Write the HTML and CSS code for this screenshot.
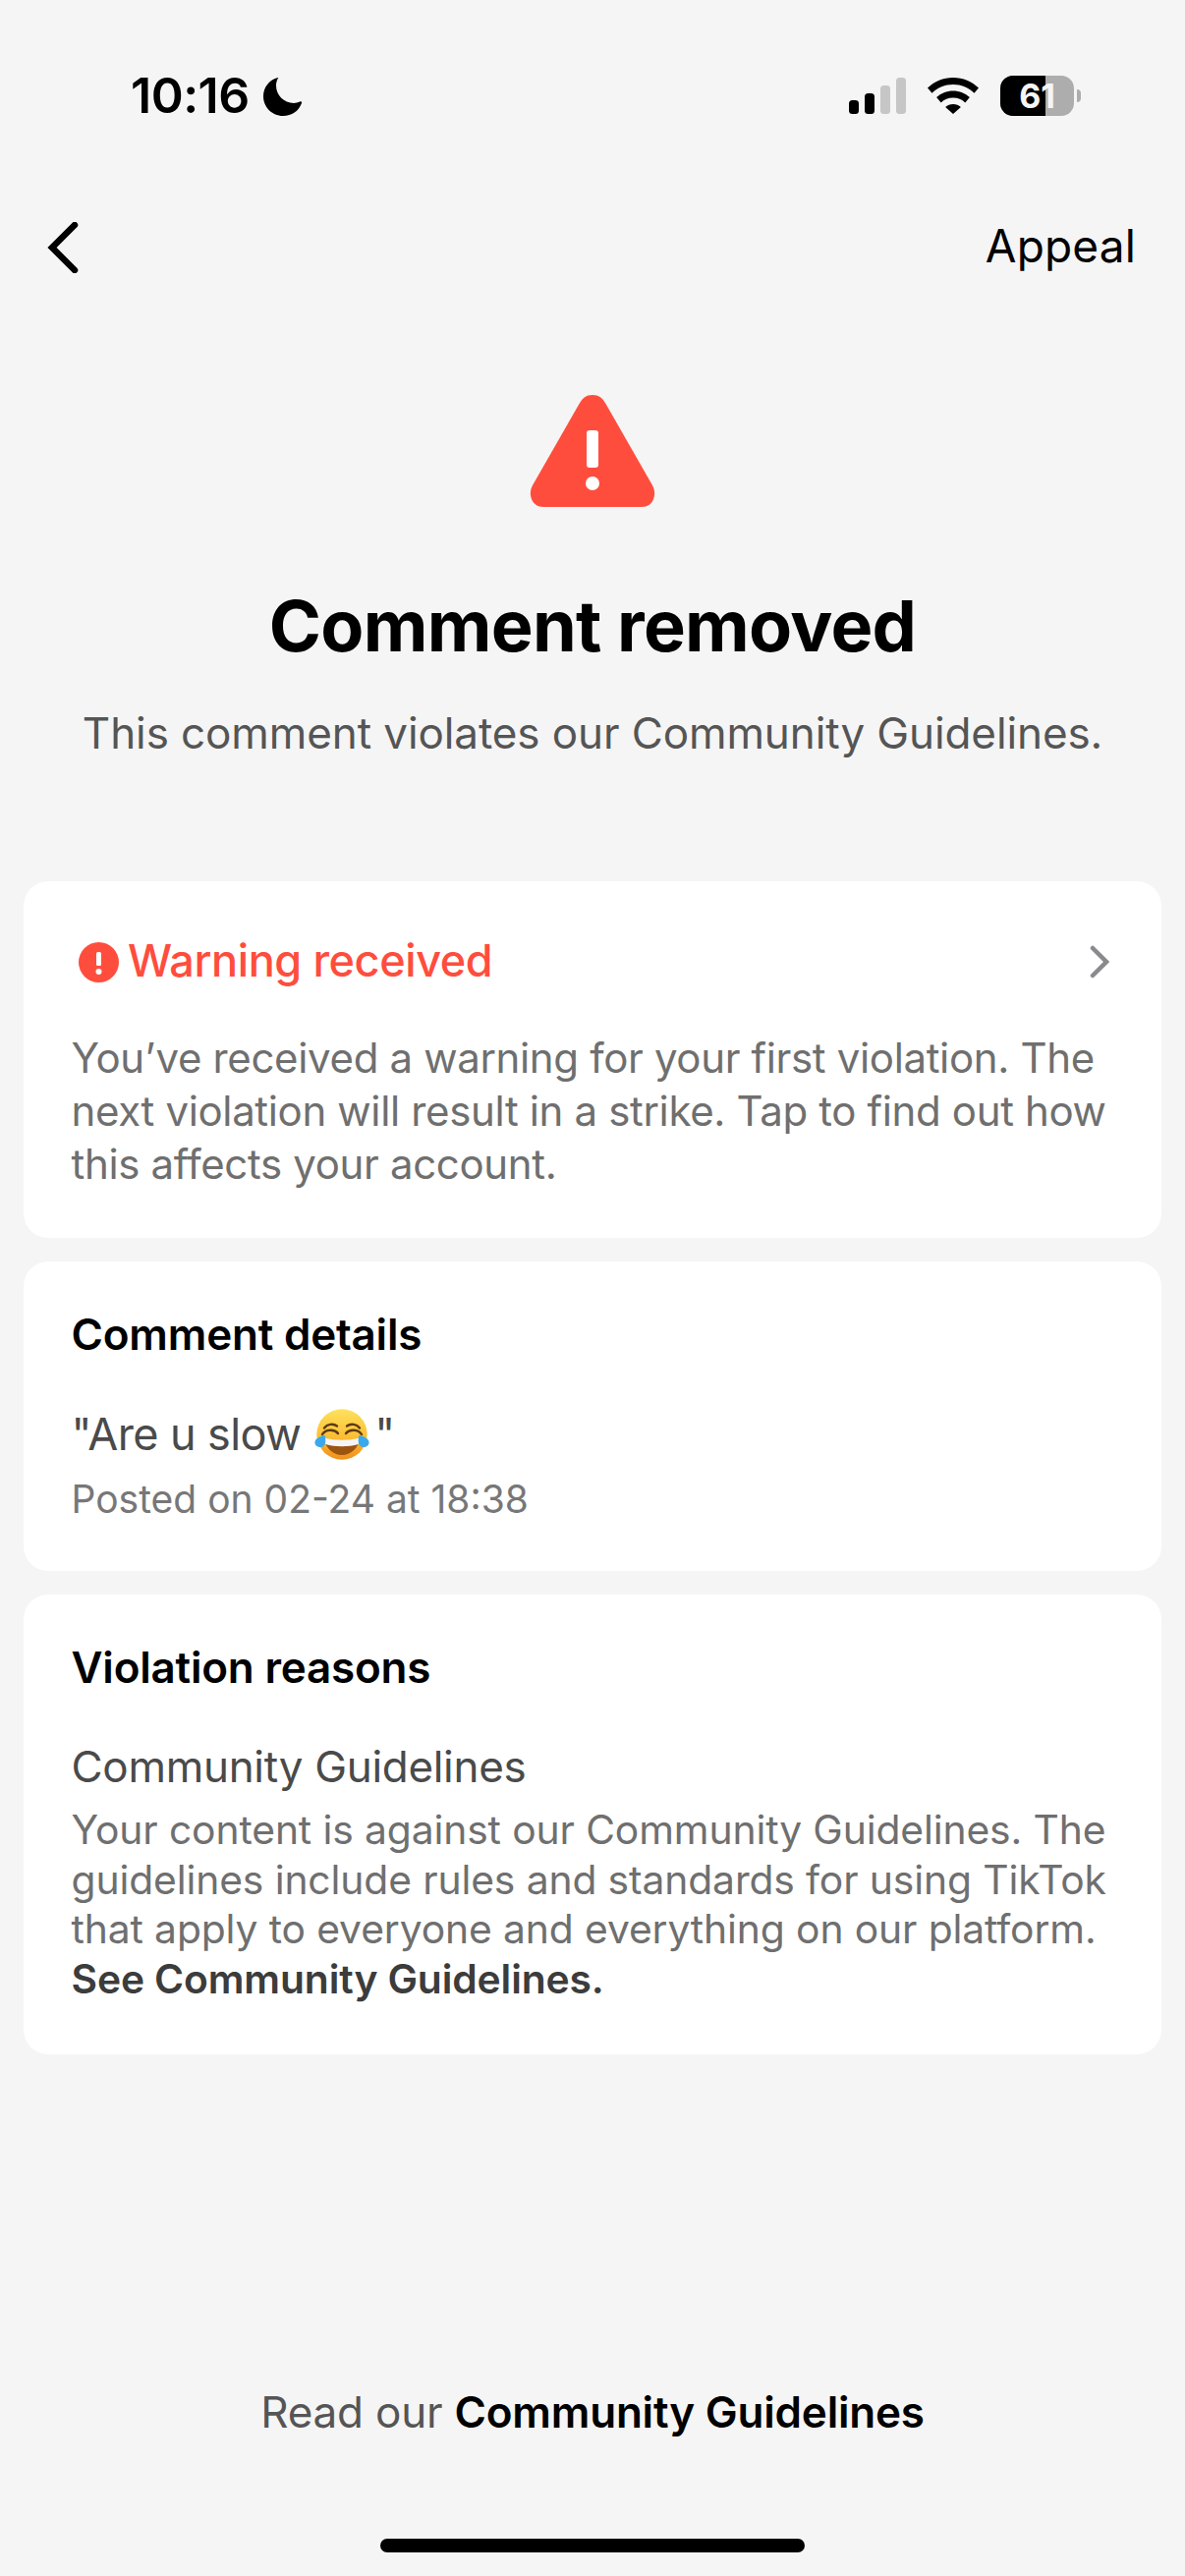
FILE: index.html
```html
<!DOCTYPE html>
<html lang="en">
<head>
<meta charset="utf-8">
<title>Comment removed</title>
<link rel="stylesheet" href="styles.css">
</head>
<body>
<div class="page">
  <header class="status">
    <div class="status-left">
      <span class="time">10:16</span>
      <svg class="moon" viewBox="0 0 40 40"><path d="M15 1C6 3 0 11 0 20c0 11 9 20 20 20 9 0 16-5 19-13 .4-1.400-.8-2-1.800-1.500-2 .9-4 1.400-6.200 1.400C21 26.900 13 19 13 9c0-2.400.5-4.600 1.500-6.600C15.200 1.300 15.800.8 15 1z"/></svg>
    </div>
    <div class="status-right">
      <svg class="signal" viewBox="0 0 58 37"><rect x="0" y="23" width="10" height="14" rx="3.500"/><rect x="16" y="16" width="10" height="21" rx="3.500"/><rect class="off" x="32" y="8" width="10" height="29" rx="3.500"/><rect class="off" x="48" y="0" width="10" height="37" rx="3.500"/></svg>
      <svg class="wifi" viewBox="0 0 52 37"><path d="M26 0c10 0 19 4 26 10.500l-4.500 5.200C41.800 10.300 34.200 7 26 7S10.200 10.300 4.500 15.700L0 10.500C7 4 16 0 26 0z"/><path d="M26 13.500c6.500 0 12.400 2.500 16.900 6.600l-4.600 5.300c-3.200-3-7.500-4.900-12.300-4.900s-9.100 1.900-12.300 4.900l-4.600-5.300C13.600 16 19.500 13.500 26 13.500z"/><path d="M26 27c3 0 5.800 1.100 7.900 3L26 37l-7.900-7c2.100-1.900 4.900-3 7.900-3z"/></svg>
      <div class="battery">
        <span class="battery-fill"></span>
        <span class="battery-num">61</span>
      </div>
      <span class="battery-tip"></span>
    </div>
  </header>

  <nav class="nav">
    <svg class="back" viewBox="0 0 32 52"><path d="M28 3 5 26l23 23"/></svg>
    <span class="appeal">Appeal</span>
  </nav>

  <section class="hero">
    <svg class="hero-icon" viewBox="0 0 128 114"><path class="red" d="M64 0c6.500 0 10 3 13.500 9l47.500 83c5 9 1 22-11 22H14C2 114-2 101 3 92L50.500 9C54 3 57.500 0 64 0z"/><rect class="white" x="58" y="36" width="12" height="38" rx="3"/><circle class="white" cx="64" cy="90" r="7"/></svg>
    <h1 class="title">Comment removed</h1>
    <p class="subtitle">This comment violates our Community Guidelines.</p>
  </section>

  <main class="cards">
    <article class="card card-warning">
      <div class="warning-head">
        <div class="warning-label">
          <svg class="warn-icon" viewBox="0 0 41 41"><circle class="red" cx="20.500" cy="20.500" r="20.500"/><rect class="white" x="18" y="10" width="5" height="14" rx="1.500"/><circle class="white" cx="20.500" cy="30" r="3"/></svg>
          <span class="warning-text">Warning received</span>
        </div>
        <svg class="chev" viewBox="0 0 20 34"><path d="M3 3l14 14L3 31"/></svg>
      </div>
      <p class="warning-body">You’ve received a warning for your first violation. The next violation will result in a strike. Tap to find out how this affects your account.</p>
    </article>

    <article class="card card-details">
      <h2 class="card-title">Comment details</h2>
      <p class="quote"><span>"Are u slow</span><svg class="emoji" viewBox="0 0 56 52"><defs><linearGradient id="face" x1="0" y1="0" x2="0" y2="1"><stop offset="0" stop-color="#fde25e"/><stop offset="0.55" stop-color="#fbbe35"/><stop offset="1" stop-color="#f0901c"/></linearGradient></defs><circle cx="28" cy="26" r="25.700" fill="url(#face)"/><path d="M10 30c11 3 25 3 36 0-1 10-9 17-18 17S11 40 10 30z" fill="#9c5510"/><path d="M10 29.500c11 3 25 3 36 0l-1.200 6.500c-10 3-23.600 3-33.600 0z" fill="#f6f6f6"/><path d="M8 26c3-5 12-6 16-1M48 26c-3-5-12-6-16-1M10 19.500c3-4 9-5 13-2M46 19.500c-3-4-9-5-13-2" fill="none" stroke="#5d3a12" stroke-width="2.400" stroke-linecap="round"/><path d="M10.500 27c.8 2 1 5 .6 7.500-.5 3-2.600 4.500-5.100 4.500C2.500 39 0 36.500.5 33.500 1 30 7 27.500 10.500 27zM45.500 27c-.8 2-1 5-.6 7.500.5 3 2.600 4.500 5.100 4.500 3.500 0 6-2.500 5.500-5.500C55 30 49 27.500 45.500 27z" fill="#38a9ee"/></svg><span>"</span></p>
      <p class="posted">Posted on 02-24 at 18:38</p>
    </article>

    <article class="card card-reasons">
      <h2 class="card-title">Violation reasons</h2>
      <p class="reason-name">Community Guidelines</p>
      <p class="reason-body">Your content is against our Community Guidelines. The guidelines include rules and standards for using TikTok that apply to everyone and everything on our platform. <strong class="reason-link">See Community Guidelines.</strong></p>
    </article>
  </main>

  <footer class="footer">
    <p class="read">Read our <strong class="read-link">Community Guidelines</strong></p>
    <div class="home"></div>
  </footer>
</div>
</body>
</html>
```

FILE: styles.css
```css
* { box-sizing: border-box; margin: 0; padding: 0; }
html, body { background: #f5f5f5; }
body { font-family: "Inter", "Liberation Sans", sans-serif; color: #000; }
.page { width: 1206px; height: 2622px; display: flex; flex-direction: column; overflow: hidden; }

.status { height: 200px; padding: 77px 106px 0 133px; display: flex; justify-content: space-between; align-items: flex-start; }
.status-left { display: flex; align-items: center; gap: 14px; height: 41px; }
.time { font-size: 50px; font-weight: 600; line-height: 41px; letter-spacing: -0.5px; }
.moon { width: 40px; height: 40px; fill: #000; }
.status-right { display: flex; align-items: center; height: 41px; }
.signal { width: 58px; height: 37px; fill: #000; margin-right: 22px; }
.signal .off { fill: #c6c6c6; }
.wifi { width: 52px; height: 37px; fill: #000; margin-right: 22px; }
.battery { position: relative; width: 75px; height: 41px; border-radius: 13px; background: #adadad; overflow: hidden; display: flex; align-items: center; justify-content: center; }
.battery-fill { position: absolute; left: 0; top: 0; bottom: 0; width: 46px; background: #000; }
.battery-num { position: relative; color: #f5f5f5; font-size: 34px; font-weight: 700; line-height: 41px; }
.battery-tip { width: 4px; height: 13px; margin-left: 3px; background: #adadad; border-radius: 0 6px 6px 0; }

.nav { height: 104px; padding: 0 50px 0 48px; display: flex; justify-content: space-between; align-items: center; }
.back { width: 32px; height: 52px; fill: none; stroke: #000; stroke-width: 6.500; stroke-linecap: round; stroke-linejoin: miter; }
.appeal { font-size: 46px; font-weight: 400; letter-spacing: 0.15px; padding-bottom: 4px; }

.hero { display: flex; flex-direction: column; align-items: center; padding-top: 98px; }
.hero-icon { width: 128px; height: 114px; }
.red { fill: #ff4d3d; }
.white { fill: #fff; }
.title { font-size: 72px; font-weight: 700; line-height: 86px; margin-top: 78px; letter-spacing: -0.7px; }
.subtitle { font-size: 44px; font-weight: 400; line-height: 54px; margin-top: 39px; color: #555; letter-spacing: -0.1px; }

.cards { display: flex; flex-direction: column; gap: 24px; padding: 0 24px; margin-top: 124px; }
.card { background: #fff; border-radius: 25px; padding: 0 50px 0 48.500px; }
.card-warning { height: 363px; padding-top: 52px; }
.warning-head { display: flex; justify-content: space-between; align-items: center; height: 60px; padding-right: 3px; }
.warning-label { display: flex; align-items: center; gap: 9px; margin-left: 7.500px; }
.warn-icon { width: 41px; height: 41px; }
.warning-text { font-size: 45px; font-weight: 500; color: #ff4d3d; letter-spacing: -0.4px; padding-bottom: 3px; }
.chev { width: 20px; height: 34px; fill: none; stroke: #8a8a8e; stroke-width: 4.500; stroke-linecap: round; }
.warning-body { margin-top: 41px; font-size: 42px; line-height: 54px; color: #6f6f6f; letter-spacing: -0.35px; }

.card-details { height: 315px; padding-top: 44px; }
.card-title { font-size: 44px; font-weight: 600; line-height: 60px; letter-spacing: -0.2px; }
.quote { margin-top: 42px; font-size: 45px; line-height: 60px; color: #4a4a4a; letter-spacing: -0.6px; display: flex; align-items: center; white-space: pre; }
.emoji { width: 56px; height: 52px; margin: 0 5px 0 14px; }
.posted { margin-top: 9px; font-size: 39px; line-height: 54px; color: #777; }

.card-reasons { height: 468px; padding-top: 44px; }
.reason-name { margin-top: 42px; font-size: 44px; line-height: 58px; color: #4a4a4a; letter-spacing: -0.3px; }
.reason-body { margin-top: 10px; font-size: 40.800px; line-height: 50.700px; color: #6f6f6f; letter-spacing: -0.12px; }
.reason-link { font-weight: 600; color: #3c3c3c; }

.footer { margin-top: auto; display: flex; flex-direction: column; align-items: center; padding-bottom: 24px; }
.read { font-size: 44px; line-height: 60px; color: #555; letter-spacing: -0.2px; }
.read-link { font-weight: 600; color: #000; }
.home { width: 432px; height: 14px; border-radius: 7px; background: #000; margin-top: 99px; }
```
